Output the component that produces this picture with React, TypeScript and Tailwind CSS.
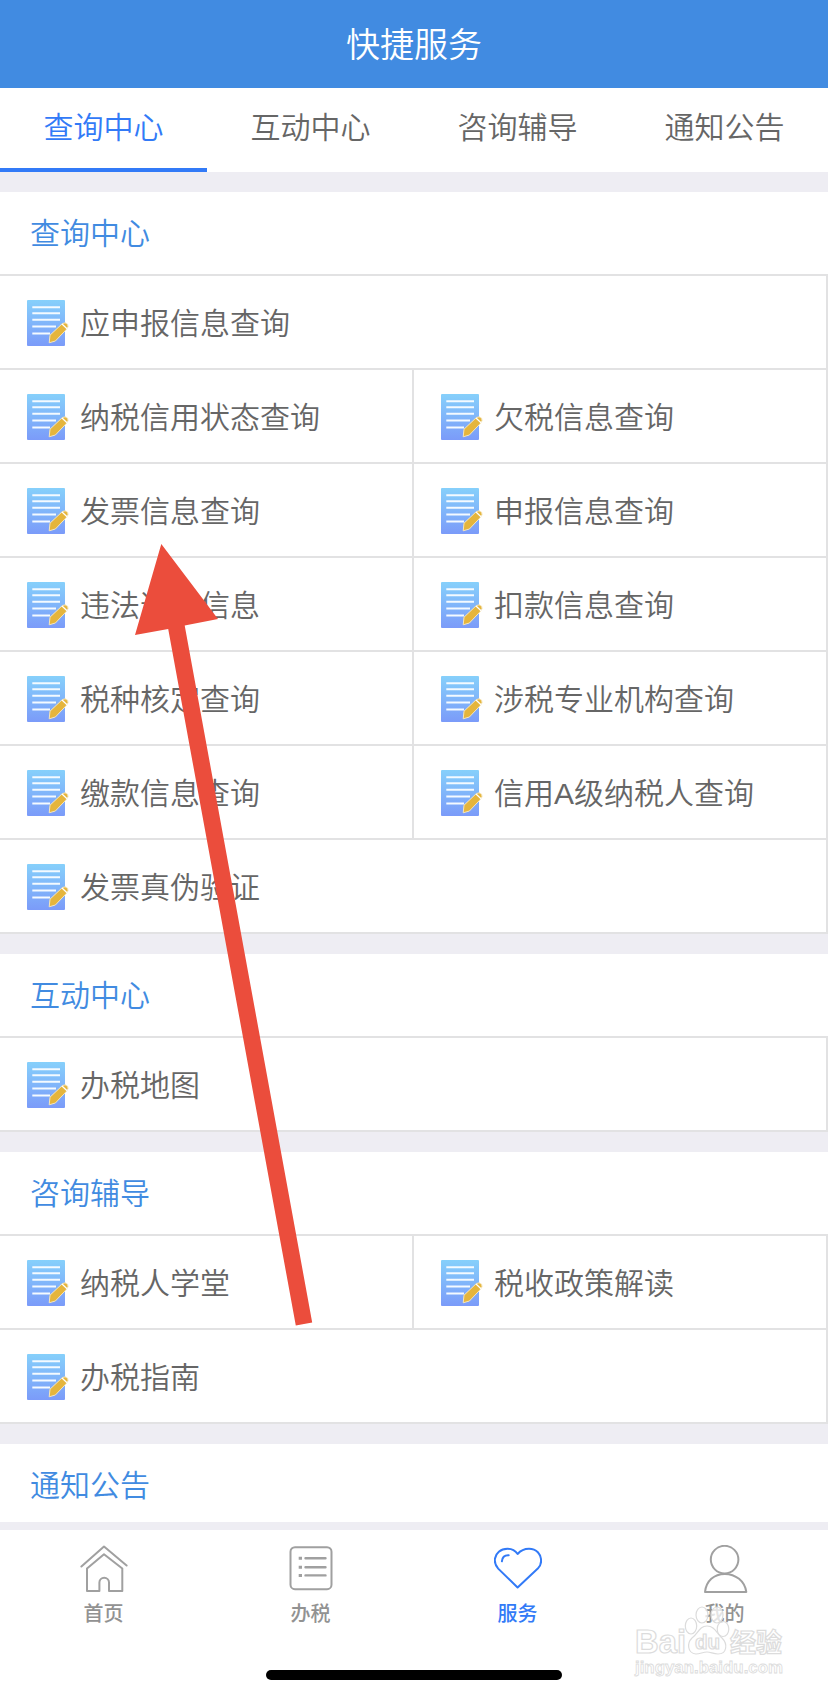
type Section = { title: string; rows: string[][] };

const tabs = ["查询中心", "互动中心", "咨询辅导", "通知公告"];

const sections: Section[] = [
  {
    title: "查询中心",
    rows: [
      ["应申报信息查询"],
      ["纳税信用状态查询", "欠税信息查询"],
      ["发票信息查询", "申报信息查询"],
      ["违法违章信息", "扣款信息查询"],
      ["税种核定查询", "涉税专业机构查询"],
      ["缴款信息查询", "信用A级纳税人查询"],
      ["发票真伪验证"],
    ],
  },
  { title: "互动中心", rows: [["办税地图"]] },
  { title: "咨询辅导", rows: [["纳税人学堂", "税收政策解读"], ["办税指南"]] },
];

function DocIcon() {
  return (
    <svg className="h-[50px] w-[44px] shrink-0" viewBox="0 0 44 50">
      <defs>
        <linearGradient id="sheet" x1="0" y1="0" x2="0" y2="1">
          <stop offset="0" stopColor="#86d0fb" />
          <stop offset="1" stopColor="#7b9bf9" />
        </linearGradient>
      </defs>
      <rect x="1" y="2" width="38" height="46" rx="1" fill="url(#sheet)" />
      <path
        d="M6.3 9.3H34M6.3 15.3H34M6.3 21.7H34M6.3 28.6H30M6.3 35.4H24"
        stroke="#f4faff"
        strokeWidth="2"
      />
      <path
        d="M23.2 44.8L24 37.2L36.3 25.6Q39.3 23.8 41.5 26.2Q43 28.4 41 30.8L29.4 43L23.2 44.8Z"
        fill="#e5b53c"
        stroke="#f5e6bd"
        strokeWidth="1"
        strokeLinejoin="round"
      />
      <path d="M36 26L41.3 31" stroke="#fff" strokeWidth="1.2" />
    </svg>
  );
}

function HomeIcon() {
  return (
    <svg className="h-12 w-12" viewBox="0 0 48 48" fill="none" stroke="currentColor" strokeWidth="2" strokeLinecap="round" strokeLinejoin="round">
      <path d="M1.4 21.5L24 1.5L46.6 20.5" />
      <path d="M7 23.5L24 9.3L42.3 23.5V46H29V37.5A4.8 4.8 0 0 0 19.4 37.5V46H7Z" />
    </svg>
  );
}

function ListIcon() {
  return (
    <svg className="h-12 w-12" viewBox="0 0 48 48" fill="none" stroke="currentColor" strokeWidth="2">
      <rect x="3.5" y="2.2" width="41" height="42" rx="4.5" />
      <path d="M18.5 13.3H38.5M18.5 22.3H38.5M18.5 30.4H38.5" strokeWidth="2.4" strokeLinecap="round" />
      <path d="M11.7 13.3H15M11.7 22.3H15M11.7 30.4H15" strokeWidth="3" />
    </svg>
  );
}

function HeartIcon() {
  return (
    <svg className="h-12 w-12" viewBox="0 0 48 48" fill="none" stroke="currentColor" strokeWidth="2" strokeLinejoin="round" strokeLinecap="round">
      <path d="M23.6 42.5L4.2 23.6C1.4 20.5 .5 17.5 .9 14C1.6 8 6.5 3.8 13.5 3.8C18 3.8 21.5 6 23.6 9C26.5 5.7 30.5 3.8 35 3.8C42.5 3.8 47.1 9 47.1 16C47.1 19 46 21.3 43.8 23.6Z" />
      <path d="M7.9 16.3C8.2 12.5 10.7 10 14.7 10.2" />
    </svg>
  );
}

function UserIcon() {
  return (
    <svg className="h-12 w-12" viewBox="0 0 48 48" fill="none" stroke="currentColor" strokeWidth="2" strokeLinejoin="round">
      <circle cx="23.6" cy="14.6" r="13.8" />
      <path d="M4 47C5.2 36 13 28.9 23.8 28.9S43.8 36 45.3 47Z" />
    </svg>
  );
}

const navItems = [
  { label: "首页", Icon: HomeIcon, active: false },
  { label: "办税", Icon: ListIcon, active: false },
  { label: "服务", Icon: HeartIcon, active: true },
  { label: "我的", Icon: UserIcon, active: false },
];

function SectionTitle({ children }: { children: string }) {
  return <h2 className="flex h-[82px] items-center bg-white pt-[2px] pl-[30px] text-[30px] leading-none text-[#418be1]">{children}</h2>;
}

function Watermark() {
  return (
    <svg
      className="absolute right-[37px] bottom-[13px] h-[80px] w-[160px]"
      viewBox="0 0 160 80"
      fill="#fff"
      fillOpacity=".75"
      stroke="#dcdcdc"
      strokeWidth="1.2"
    >
      <text x="4" y="50" textLength="51" lengthAdjust="spacingAndGlyphs" className="font-['Liberation_Sans'] text-[33px] font-bold">
        Bai
      </text>
      <ellipse cx="60" cy="23" rx="5.7" ry="8" />
      <ellipse cx="71" cy="12" rx="6" ry="8" />
      <ellipse cx="86" cy="12" rx="6" ry="8" />
      <ellipse cx="92" cy="26" rx="5.8" ry="7.5" />
      <path d="M76 23C84 23 86 31 91 35C97 41 96 51 87 51C82 51 80 49 76 49S69 51 65 51C56 50 56 40 61 35C67 31 68 23 76 23Z" />
      <text x="64" y="46" textLength="25" lengthAdjust="spacingAndGlyphs" className="font-['Liberation_Sans'] text-[20px] font-bold">
        du
      </text>
      <text x="99" y="49" textLength="52" className="font-['Noto_Sans_CJK_SC'] text-[26px] font-bold">
        经验
      </text>
      <text x="4" y="70" textLength="148" strokeWidth=".8" lengthAdjust="spacingAndGlyphs" className="font-['Liberation_Sans'] text-[17px] font-bold">
        jingyan.baidu.com
      </text>
    </svg>
  );
}

export default function App() {
  return (
    <div className="relative flex h-[1696px] w-[828px] flex-col overflow-hidden bg-[#eeedf3] font-['Liberation_Sans','Noto_Sans_CJK_SC',sans-serif] font-[350] text-[#666]">
      <header className="flex h-[88px] shrink-0 items-center justify-center bg-[#418be1] pt-px text-[34px] leading-none text-white">
        <h1>快捷服务</h1>
      </header>

      <nav className="grid h-[84px] shrink-0 grid-cols-4 bg-white text-[30px] leading-none">
        {tabs.map((tab, i) => (
          <button
            key={tab}
            className={
              i === 0
                ? "flex items-center justify-center border-b-4 border-[#327af7] text-[#327af7]"
                : "flex items-center justify-center border-b-4 border-transparent"
            }
          >
            {tab}
          </button>
        ))}
      </nav>

      <main className="flex h-[1350px] shrink-0 flex-col gap-5 overflow-hidden pt-5">
        {sections.map((section) => (
          <section key={section.title} className="shrink-0">
            <SectionTitle>{section.title}</SectionTitle>
            <div className="border-t-2 border-[#e2e2e3] bg-white">
              {section.rows.map((row) => (
                <div key={row[0]} className="flex h-[94px] border-b-2 border-[#e2e2e3]">
                  {row.map((item) => (
                    <div key={item} className="flex flex-1 items-center gap-[10px] border-r-2 border-[#e2e2e3] pt-[2px] pl-[26px] text-[30px] leading-none">
                      <DocIcon />
                      <span className="whitespace-nowrap pt-[2px]">{item}</span>
                    </div>
                  ))}
                </div>
              ))}
            </div>
          </section>
        ))}
        <section className="shrink-0">
          <SectionTitle>通知公告</SectionTitle>
        </section>
      </main>

      <footer className="mt-2 flex h-[166px] shrink-0 flex-col items-center bg-white">
        <div className="grid h-[140px] w-full grid-cols-4 pt-[15px]">
          {navItems.map(({ label, Icon, active }) => (
            <div
              key={label}
              className={
                active
                  ? "flex flex-col items-center gap-[11px] text-[#327af7]"
                  : "flex flex-col items-center gap-[11px] text-[#a0a0a0]"
              }
            >
              <Icon />
              <span className={active ? "text-[20px] leading-none font-medium" : "text-[20px] leading-none font-medium text-[#929292]"}>{label}</span>
            </div>
          ))}
        </div>
        <div className="h-[10px] w-[296px] rounded-full bg-black" />
      </footer>

      <svg className="pointer-events-none absolute top-[540px] left-[130px] h-[790px] w-[190px]" viewBox="130 540 190 790">
        <path d="M161.3 544L218 619L184.7 625.5L312.2 1322.5L295.8 1325.5L168.2 629L135 635Z" fill="#eb4d3c" />
      </svg>
      <Watermark />
    </div>
  );
}
